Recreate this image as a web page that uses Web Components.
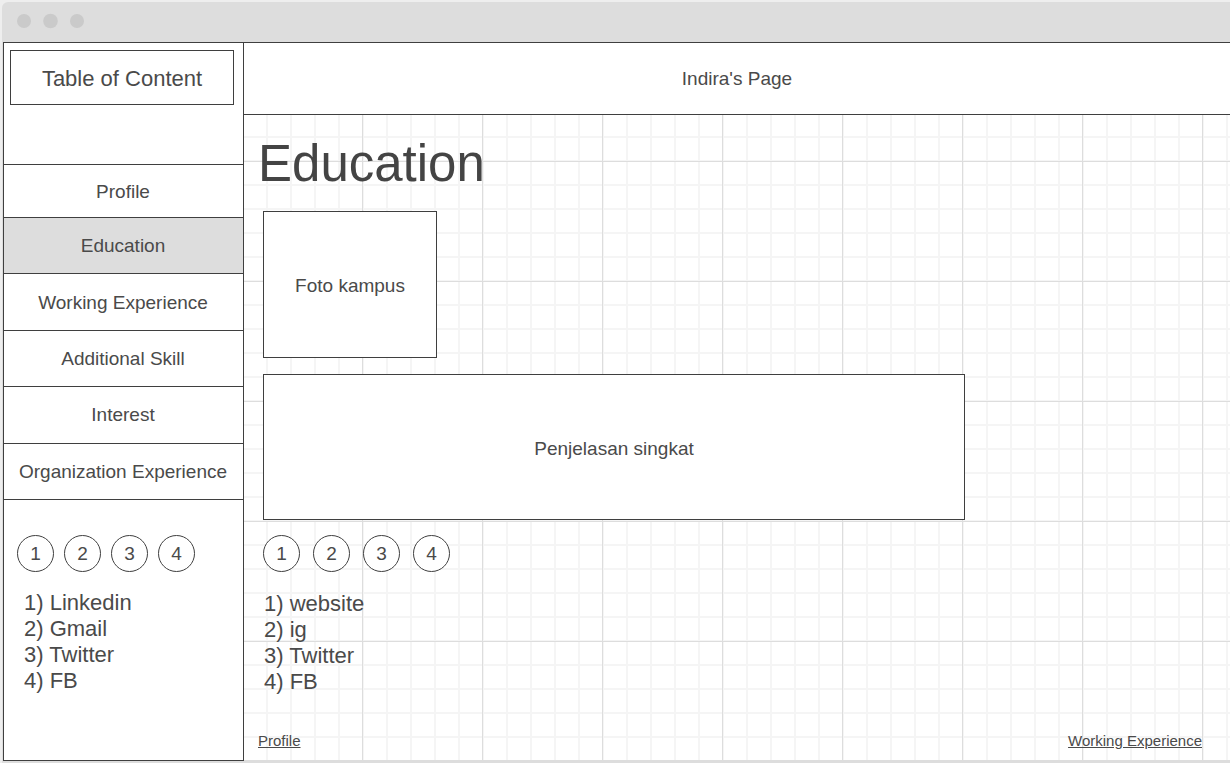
<!DOCTYPE html>
<html lang="id">
<head>
<meta charset="utf-8">
<meta name="viewport" content="width=device-width, initial-scale=1">
<title>Indira's Page</title>
<style>
  html { background: #eeeeee; }
  body {
    margin: 0;
    min-height: 100vh;
    display: flex;
    flex-direction: column;
    font-family: "Liberation Sans", Arial, sans-serif;
    font-size: 19px;
    line-height: 22px;
    color: #4a4a4a;
    --ink: #3f3f3f;
    --chrome: #dddddd;
  }
</style>
</head>
<body>
<browser-frame>
  <side-bar slot="side">
    <wire-box slot="title" class="title">Table of Content</wire-box>
    <nav-item href="#profile">Profile</nav-item>
    <nav-item href="#education" current>Education</nav-item>
    <nav-item href="#working">Working Experience</nav-item>
    <nav-item href="#skill">Additional Skill</nav-item>
    <nav-item href="#interest">Interest</nav-item>
    <nav-item href="#organization">Organization Experience</nav-item>
    <link-set slot="links" items="Linkedin,Gmail,Twitter,FB"></link-set>
  </side-bar>
  <page-header slot="header">Indira's Page</page-header>
  <page-content slot="content" heading="Education">
    <wire-box class="photo">Foto kampus</wire-box>
    <wire-box class="summary">Penjelasan singkat</wire-box>
    <link-set wide items="website,ig,Twitter,FB"></link-set>
    <text-link slot="previous" href="#profile">Profile</text-link>
    <text-link slot="next" href="#working">Working Experience</text-link>
  </page-content>
</browser-frame>

<script>
  class BaseElement extends HTMLElement {
    constructor() {
      super();
      this.attachShadow({ mode: "open" });
    }
    connectedCallback() {
      this.shadowRoot.innerHTML = this.render();
    }
  }

  customElements.define("browser-frame", class extends BaseElement {
    render() {
      return `
        <style>
          :host { flex: 1; display: flex; flex-direction: column; box-sizing: border-box;
                  margin: 2px 0 0 2px; padding: 0 0 2px 1px;
                  background: var(--chrome); border-top-left-radius: 6px; }
          .bar { height: 40px; }
          svg { display: block; }
          .body { flex: 1; display: grid; grid-template-columns: 241px minmax(0, 1fr);
                  border-top: 1px solid var(--ink); }
          .main { display: flex; flex-direction: column; margin-bottom: 1px; }
        </style>
        <div class="bar">
          <svg width="90" height="40" fill="#cacaca" aria-hidden="true">
            <circle cx="21" cy="19" r="7"/>
            <circle cx="47.5" cy="19" r="7.3"/>
            <circle cx="74" cy="19" r="7"/>
          </svg>
        </div>
        <div class="body">
          <slot name="side"></slot>
          <div class="main"><slot name="header"></slot><slot name="content"></slot></div>
        </div>`;
    }
  });

  customElements.define("side-bar", class extends BaseElement {
    render() {
      return `
        <style>
          :host { display: block; background: #ffffff;
                  border: 1px solid var(--ink); border-top: 0; }
          .title { padding: 7px 9px 59px 6px; }
          nav { display: grid; grid-template-rows: 53px; grid-auto-rows: 1fr;
                min-height: 335px; border-top: 1px solid var(--ink); }
          .links { padding: 35px 13px; }
        </style>
        <div class="title"><slot name="title"></slot></div>
        <nav><slot></slot></nav>
        <div class="links"><slot name="links"></slot></div>`;
    }
  });

  customElements.define("nav-item", class extends BaseElement {
    render() {
      return `
        <style>
          :host { display: flex; border-bottom: 1px solid var(--ink); }
          :host([current]) { background: var(--chrome); }
          a { flex: 1; display: flex; align-items: center; justify-content: center;
              padding: 1px 1px 0 0; color: inherit; text-decoration: none; }
        </style>
        <a href="${this.getAttribute("href")}"><slot></slot></a>`;
    }
  });

  customElements.define("wire-box", class extends BaseElement {
    render() {
      return `
        <style>
          :host { display: flex; align-items: center; justify-content: center;
                  box-sizing: border-box; padding-top: 3px;
                  border: 1px solid var(--ink); background: #ffffff; }
          :host(.title) { min-height: 55px; font-size: 22px; line-height: 26px; }
          :host(.photo) { width: 174px; min-height: 147px; }
          :host(.summary) { width: 100%; max-width: 702px; min-height: 146px; margin-top: 16px; }
        </style>
        <slot></slot>`;
    }
  });

  customElements.define("page-header", class extends BaseElement {
    render() {
      return `
        <style>
          :host { display: flex; align-items: center; justify-content: center;
                  min-height: 71px; background: #ffffff; border-bottom: 1px solid var(--ink); }
        </style>
        <slot></slot>`;
    }
  });

  customElements.define("link-set", class extends BaseElement {
    render() {
      const items = this.getAttribute("items").split(",");
      return `
        <style>
          :host { display: block; }
          .dots { display: flex; gap: 10px; }
          :host([wide]) .dots { gap: 13px; }
          a { display: flex; align-items: center; justify-content: center; box-sizing: border-box;
              width: 37px; height: 37px; border: 1px solid var(--ink); border-radius: 50%;
              background: #ffffff; color: inherit; text-decoration: none; }
          ul { margin: 18px 0 0; padding: 0 0 0 7px; list-style: none;
               font-size: 22px; line-height: 26px; }
          :host([wide]) ul { margin-top: 19px; padding-left: 1px; }
        </style>
        <div class="dots">${items.map((name, i) => `<a href="#${name}" aria-label="${name}">${i + 1}</a>`).join("")}</div>
        <ul>${items.map((name, i) => `<li>${i + 1}) ${name}</li>`).join("")}</ul>`;
    }
  });

  customElements.define("page-content", class extends BaseElement {
    render() {
      return `
        <style>
          :host {
            flex: 1; display: flex; flex-direction: column; box-sizing: border-box;
            padding: 20px 28px 8px 14px;
            background-color: #ffffff;
            background-image:
              linear-gradient(to right, #dddddd 1px, transparent 1px),
              linear-gradient(to bottom, #dddddd 1px, transparent 1px),
              linear-gradient(to right, #f5f5f5 2px, transparent 2px),
              linear-gradient(to bottom, #f5f5f5 2px, transparent 2px);
            background-size: 120px 120px, 120px 120px, 24px 24px, 24px 24px;
            background-position: 118px 0, 0 46px, 22px 0, 0 21px;
          }
          h1 { margin: 0; font-size: 51px; line-height: 58px; font-weight: 400; color: #444444; }
          .stack { padding: 18px 0 0 5px; }
          footer { margin-top: auto; padding-top: 24px; display: flex; justify-content: space-between; }
          ::slotted(link-set) { margin-top: 15px; }
        </style>
        <h1>${this.getAttribute("heading")}</h1>
        <div class="stack"><slot></slot></div>
        <footer><slot name="previous"></slot><slot name="next"></slot></footer>`;
    }
  });

  customElements.define("text-link", class extends BaseElement {
    render() {
      return `
        <style>
          :host { display: block; font-size: 15px; line-height: 22px; }
          a { color: inherit; }
        </style>
        <a href="${this.getAttribute("href")}"><slot></slot></a>`;
    }
  });
</script>
</body>
</html>
